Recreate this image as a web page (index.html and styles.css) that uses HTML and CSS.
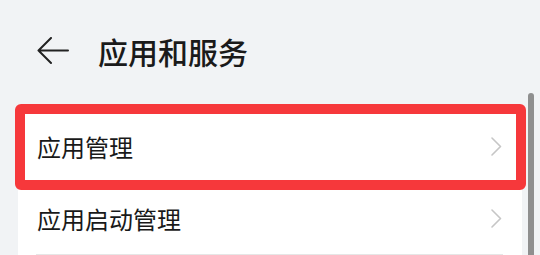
FILE: index.html
```html
<!DOCTYPE html>
<html lang="zh-CN">
<head>
  <meta charset="UTF-8">
  <meta name="viewport" content="width=device-width, initial-scale=1.0">
  <title>应用和服务</title>
  <link rel="stylesheet" href="styles.css">
</head>
<body>
  <div class="page">
    <div class="header">
      <svg class="back" width="32" height="28" viewBox="0 0 32 28">
        <path d="M14 1 L1.5 13.5 L14 26 M1.5 13.5 H31" fill="none" stroke="#222" stroke-width="2" stroke-linecap="round" stroke-linejoin="round"/>
      </svg>
      <h1>应用和服务</h1>
    </div>
    <ul class="card">
      <li class="row highlighted">
        <div class="row-inner">
          <span class="label">应用管理</span>
          <svg class="chevron" width="11" height="19" viewBox="0 0 11 19"><path d="M1 1 L9.5 9.5 L1 18" fill="none" stroke="#c6c6c6" stroke-width="1.6" stroke-linecap="round" stroke-linejoin="round"/></svg>
        </div>
        <div class="mark"></div>
      </li>
      <li class="row">
        <div class="row-inner">
          <span class="label">应用启动管理</span>
          <svg class="chevron" width="11" height="19" viewBox="0 0 11 19"><path d="M1 1 L9.5 9.5 L1 18" fill="none" stroke="#c6c6c6" stroke-width="1.6" stroke-linecap="round" stroke-linejoin="round"/></svg>
        </div>
      </li>
    </ul>
    <div class="scrollbar"></div>
  </div>
</body>
</html>
```

FILE: styles.css
```css
html, body {
  margin: 0;
  padding: 0;
  background-color: #f1f3f5;
}
.page {
  position: relative;
  height: 255px;
  overflow: hidden;
  font-family: "Noto Sans CJK SC", "Noto Sans", sans-serif;
  color: #191919;
}
.header {
  display: flex;
  align-items: center;
  height: 102px;
  padding-left: 37px;
}
.back {
  display: block;
}
.header h1 {
  margin: 0 0 0 29px;
  font-size: 30px;
  font-weight: 500;
  line-height: 1;
  color: #1a1a1a;
}
.card {
  list-style-type: none;
  margin: 9px 18px 0;
  padding: 0;
  background-color: #fff;
  border-radius: 16px 16px 0 0;
}
.row {
  position: relative;
  padding: 0 19px 0 18px;
}
.row-inner {
  display: flex;
  align-items: center;
  justify-content: space-between;
  height: 72px;
  box-sizing: border-box;
  border-bottom: 1px solid #e6e6e6;
}
.label {
  font-size: 24px;
  line-height: 1;
  padding-left: 1px;
}
.chevron {
  display: block;
  margin-right: 1px;
}
.mark {
  position: absolute;
  left: -3px;
  top: -7px;
  right: -4px;
  bottom: -7px;
  border: 10px solid #f6383b;
  border-radius: 6px;
}
.scrollbar {
  position: absolute;
  right: 6px;
  top: 93px;
  width: 6px;
  height: 200px;
  background-color: #8f8f8f;
  border-radius: 3px;
}
```
